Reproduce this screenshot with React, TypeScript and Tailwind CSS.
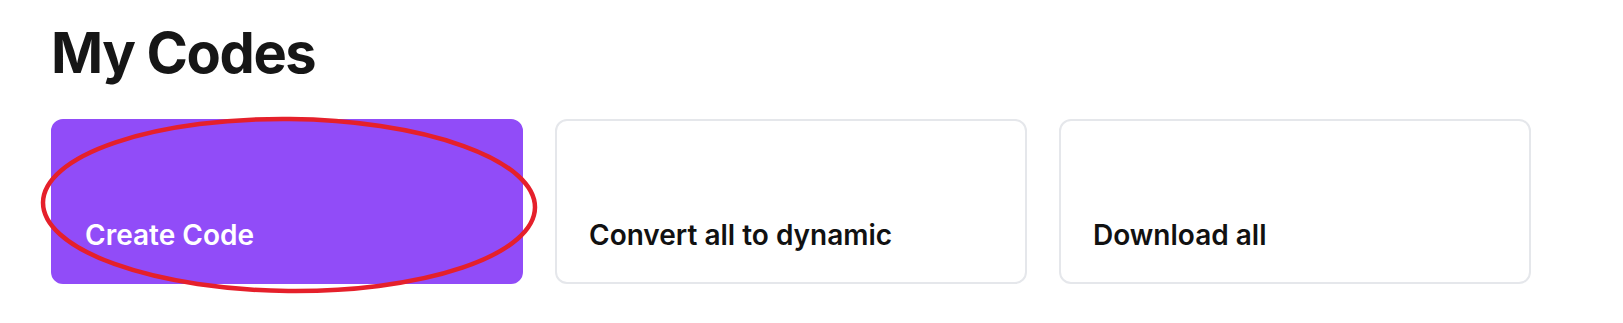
const cards = [
  { label: "Create Code", primary: true },
  { label: "Convert all to dynamic", primary: false },
  { label: "Download all", primary: false },
];

const App = () => {
  return (
    <div
      className="min-h-screen bg-white px-[51px] pt-[25px]"
      style={{ fontFamily: "Inter, 'Noto Sans', sans-serif" }}
    >
      <h1 className="text-[56px] leading-none font-bold tracking-tight text-[#161616]">
        My Codes
      </h1>

      <div className="relative mt-[38px] flex gap-8">
        {cards.map((card) => (
          <button
            key={card.label}
            className={
              card.primary
                ? "flex h-[165px] w-[472px] items-end rounded-xl border-2 border-[#914cf8] bg-[#914cf8] px-8 pb-[31px] text-left text-[28px] leading-8 font-semibold text-white"
                : "flex h-[165px] w-[472px] items-end rounded-xl border-2 border-[#e5e7eb] bg-white px-8 pb-[31px] text-left text-[28px] leading-8 font-semibold text-[#111111]"
            }
          >
            {card.label}
          </button>
        ))}

        {/* red annotation circle over the first card */}
        <svg
          className="pointer-events-none absolute left-[-12px] top-[-4px]"
          width="500"
          height="184"
          viewBox="0 0 500 184"
        >
          <ellipse
            cx="250"
            cy="90"
            rx="246"
            ry="86"
            fill="none"
            stroke="#e5202b"
            strokeWidth="4.5"
            transform="rotate(0.6 250 90)"
          />
        </svg>
      </div>
    </div>
  );
};

export default App;
